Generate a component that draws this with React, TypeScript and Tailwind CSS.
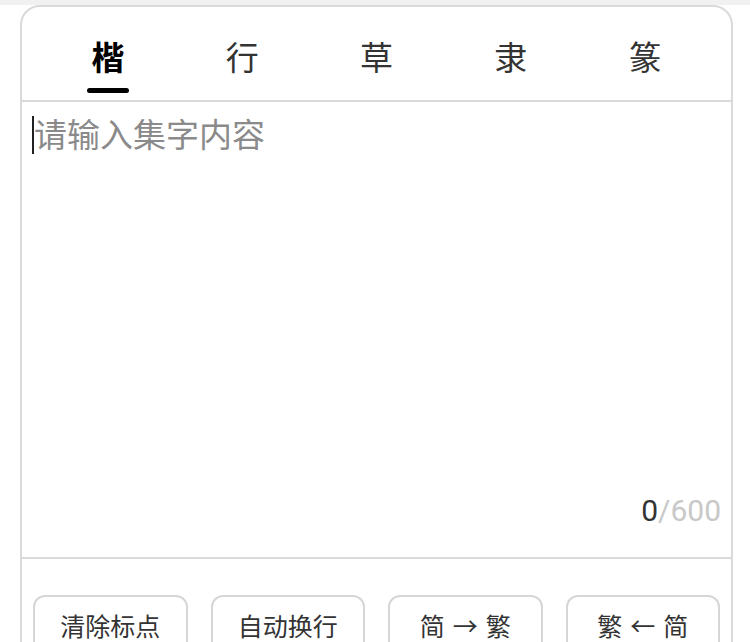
const tabs = ["楷", "行", "草", "隶", "篆"];
const actions: [string, string, string][] = [
  ["清除标点", "", ""],
  ["自动换行", "", ""],
  ["简", "→", "繁"],
  ["繁", "←", "简"],
];

export default function App() {
  const active = 0;
  return (
    <div className="min-h-[642px] bg-white overflow-hidden font-['Noto_Sans_CJK_SC',sans-serif]">
      <div className="h-[5px] bg-[#f1f1f1]" />
      <div className="ml-[20px] w-[713px] h-[700px] rounded-t-[20px] border-2 border-[#dadada] bg-white flex flex-col">
        {/* style tabs */}
        <div className="flex px-[19px] h-[95px] border-b-2 border-[#d9d9d9]">
          {tabs.map((t, i) => (
            <div key={t} className="flex-1 flex flex-col items-center pt-[29px]">
              <span
                className={
                  i === active
                    ? "text-[33px] leading-[40px] font-bold text-black"
                    : "text-[33px] leading-[40px] text-[#333]"
                }
              >
                {t}
              </span>
              {i === active && <div className="mt-[12px] w-[42px] h-[5px] rounded-full bg-black" />}
            </div>
          ))}
        </div>

        {/* input area */}
        <div className="h-[457px] flex flex-col justify-between border-b-2 border-[#d9d9d9] pt-[11px] pl-[10px] pr-[10px] pb-[26px]">
          <div className="flex items-start">
            <span className="mt-[3px] w-[2px] h-[38px] bg-[#222]" />
            <span className="text-[33px] leading-[40px] text-[#8a8a8a]">请输入集字内容</span>
          </div>
          <div className="self-end text-[30px] leading-[40px] font-['Roboto','Noto_Sans_CJK_SC',sans-serif]">
            <span className="text-[#333]">0</span>
            <span className="text-[#c8c8c8]">/600</span>
          </div>
        </div>

        {/* actions */}
        <div className="grid grid-cols-4 gap-[23px] px-[11px] pt-[36px]">
          {actions.map(([a, arrow, b]) => (
            <button
              key={a + b}
              className="h-[66px] rounded-[12px] border-2 border-[#d6d6d6] bg-white flex justify-center items-start pt-[12px] text-[25px] leading-[32px] text-[#333]"
            >
              {a}
              {arrow && <span className="mx-[8px]">{arrow}</span>}
              {b}
            </button>
          ))}
        </div>
      </div>
    </div>
  );
}
